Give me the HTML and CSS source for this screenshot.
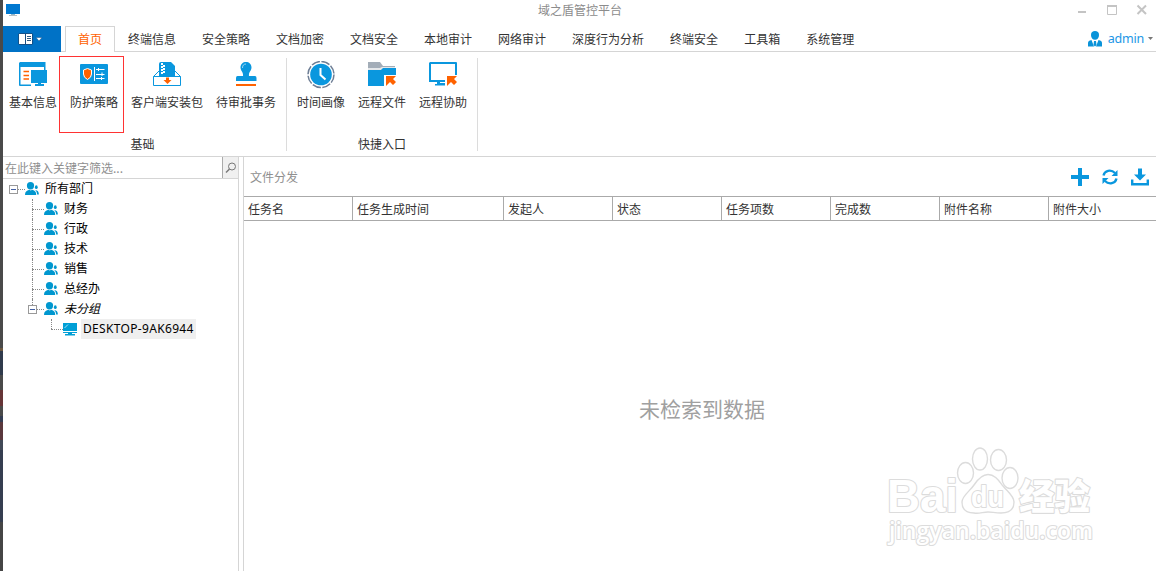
FILE: index.html
```html
<!DOCTYPE html>
<html lang="zh-CN">
<head>
<meta charset="utf-8">
<title>域之盾管控平台</title>
<link rel="stylesheet" href="styles.css">
</head>
<body>
<svg class="defs" aria-hidden="true">
  <symbol id="people" viewBox="0 0 14 13">
    <ellipse cx="11.300" cy="5.200" rx="1.400" ry="1.900"/><path d="M10.200 8C12.800 8.200 13.800 9.700 13.900 12.500H12.100C12 10.500 11.500 9.300 10.200 8Z"/>
    <ellipse cx="5.500" cy="3.700" rx="3.600" ry="3.700"/><path d="M0 12.900C0 9.800 1.600 8.600 4.300 7.800L5.700 8.600 7.300 7.800C10 8.600 11.200 9.800 11.200 12.900Z"/>
  </symbol>
</svg>
<div class="window">
  <div class="desktop-edge"></div>
  <div class="app">
    <header class="titlebar">
      <svg class="app-icon" width="16" height="14" viewBox="0 0 16 14"><path fill="#0078d0" d="M1 1H15V11H1Z"/><path fill="#8fb4c8" d="M6 11h4v1H6z"/><path fill="#b5bfc4" d="M4 12h8v1H4z"/></svg>
      <h1 class="title">域之盾管控平台</h1>
      <svg class="controls" width="72" height="14" viewBox="0 0 72 14"><g fill="none" stroke="#c4c4c4"><path stroke-width="2" d="M0 8H8M59.500 1.500L68 10M68 1.500L59.500 10"/><path d="M29.500 1.500H38.500V10.500H29.500Z"/><path stroke-width="2" d="M29 2H39"/></g></svg>
    </header>
    <nav class="tabs">
      <button class="file-menu"><svg width="25" height="12" viewBox="0 0 25 12"><rect x=".6" y=".6" width="14" height="10.800" rx="1" fill="#174f83" stroke="#174f83"/><path fill="#fff" d="M1 1H7V11H1ZM8 1H14V11H8Z"/><path stroke="#315c82" d="M9 3.500H13M9 5.500H13M9 7.500H13"/><path fill="#fff" stroke="#12538c" stroke-width=".5" d="M18 4.500H24L21 8Z"/></svg></button>
      <a class="tab active">首页</a><a class="tab">终端信息</a><a class="tab">安全策略</a><a class="tab">文档加密</a><a class="tab">文档安全</a><a class="tab">本地审计</a><a class="tab">网络审计</a><a class="tab">深度行为分析</a><a class="tab">终端安全</a><a class="tab">工具箱</a><a class="tab">系统管理</a>
      <div class="user">
        <svg width="14" height="16" viewBox="0 0 14 16" fill="#0a93d9"><path d="M3 4C3 1 4.600 0 7 0S11 1 11 4 9.300 8.700 7 8.700 3 7 3 4Z"/><path d="M0 15.500V12Q0 9.500 3.500 9L6 15.500ZM14 15.500V12Q14 9.500 10.500 9L8 15.500Z"/><path d="M6 10H8L8.500 14 7 15.500 5.500 14Z"/></svg>
        <span class="user-name">admin</span>
        <svg class="caret" width="5" height="3" viewBox="0 0 5 3"><path fill="#777" d="M0 0H5L2.500 3Z"/></svg>
      </div>
    </nav>
    <section class="ribbon">
      <div class="group">
        <div class="actions">
          <button class="action">
            <svg width="28" height="28" viewBox="0 0 28 28"><path fill="#0a97de" d="M1 1H26.500V9H25V6H1.500V23.500H12V25H1Q0 25 0 24V2Z"/><path stroke="#ff6200" stroke-width="1.500" d="M4.500 10.500H10M4.500 14.500H10M4.500 18H10"/><path fill="#0a97de" d="M12 9H28V22H22V23H25V25H16V23H19V22H12Z"/></svg>
            <span>基本信息</span></button>
          <button class="action marked">
            <svg width="28" height="28" viewBox="0 0 28 28"><rect y="3" width="28" height="20" rx="1" fill="#0a97de"/><path fill="#ff6200" stroke="#fff" d="M7.500 7.500L11.500 9V13Q11.500 16.500 7.500 18.500 3.500 16.500 3.500 13V9Z"/><path stroke="#fff" fill="none" d="M14.500 6V20M16 8.500H24.500M16 13.500H24.500M16 17.500H24.500M18.500 7V10M22 11.500V15M21.500 16V19"/></svg>
            <span>防护策略</span></button>
          <button class="action">
            <svg width="28" height="28" viewBox="0 0 28 28"><path fill="#0a97de" d="M6 15V3Q6 1 8 1H18L22 5V15Z"/><path stroke="#fff" stroke-width="2" stroke-dasharray="2 1" d="M9 2V13"/><path stroke="#fff" stroke-width="2" stroke-dasharray="2 1" stroke-dashoffset="2" d="M11 3V13"/><path stroke="#0a97de" fill="none" d="M6 10L.5 15.500H27.500L22 10"/><path stroke="#0a97de" fill="#fff" d="M.5 15.500H27.500V24.500H.5Z"/><path fill="#ff6200" d="M13 16.500H16V19H18.500L14.500 23 10.500 19H13Z"/></svg>
            <span>客户端安装包</span></button>
          <button class="action">
            <svg width="28" height="28" viewBox="0 0 28 28"><path fill="#0a97de" d="M8.500 6.500C8.500 3 11 1 14 1S19.500 3 19.500 6.500C19.500 10 16.500 11 17 15H23Q24.500 15 24.500 17V20H4V17Q4 15 5.500 15H11C11.500 11 8.500 10 8.500 6.500Z"/><path stroke="#9bd5f2" fill="none" d="M10.500 7C10.500 4 12 3 14 3"/><path fill="#ff6200" d="M4 23H24V25H4Z"/></svg>
            <span>待审批事务</span></button>
        </div>
        <div class="group-name">基础</div>
      </div>
      <div class="group">
        <div class="actions">
          <button class="action">
            <svg width="28" height="28" viewBox="0 0 28 28"><circle cx="14" cy="13.500" r="13" fill="none" stroke="#6e7e95" stroke-width="1.500" stroke-dasharray="8.700 1.510"/><circle cx="14" cy="13.500" r="10.800" fill="#0a97de"/><path fill="none" stroke="#fff" stroke-width="2" d="M13.500 7V14L18.500 18.500"/></svg>
            <span>时间画像</span></button>
          <button class="action">
            <svg width="28" height="28" viewBox="0 0 28 28"><path fill="#a3adb8" d="M0 26V1H12L15 5H27V14H0Z"/><path fill="#fff" d="M0 7H12L14 6H28V8H15L13 9H0Z" opacity=".7"/><path fill="#0a97de" d="M0 25V9H13L15 7H28V25Z"/><path fill="#fff" d="M16 14H28V27H16Z"/><path fill="#ff6200" d="M18 15H28L25 18 28 21 25 24 22 21 18 25Z"/></svg>
            <span>远程文件</span></button>
          <button class="action">
            <svg width="28" height="28" viewBox="0 0 28 28"><path fill="#0a97de" d="M1 1H27Q28 1 28 2V14H26V3H2V19H16V21H0V2Z"/><path fill="#0a97de" d="M8 21H11V22H16V24.500H6V23H8Z"/><path fill="#ff6200" d="M18 15H28L25 18 28 21 25 24 22 21 18 25Z"/></svg>
            <span>远程协助</span></button>
        </div>
        <div class="group-name">快捷入口</div>
      </div>
    </section>
    <main class="body">
      <aside class="sidebar">
        <div class="search"><span class="search-hint">在此键入关键字筛选...</span><button class="search-btn"><svg width="12" height="12" viewBox="0 0 12 12" fill="none" stroke="#777"><circle cx="7" cy="4.500" r="3.500"/><path stroke-width="1.400" d="M4.500 7L1 10.500"/></svg></button></div>
        <ul class="tree">
          <li class="root"><span class="toggle"></span><span class="dots"></span><svg class="people"><use href="#people"/></svg><span class="name">所有部门</span></li>
          <li class="child"><span class="dots"></span><svg class="people"><use href="#people"/></svg><span class="name">财务</span></li>
          <li class="child"><span class="dots"></span><svg class="people"><use href="#people"/></svg><span class="name">行政</span></li>
          <li class="child"><span class="dots"></span><svg class="people"><use href="#people"/></svg><span class="name">技术</span></li>
          <li class="child"><span class="dots"></span><svg class="people"><use href="#people"/></svg><span class="name">销售</span></li>
          <li class="child"><span class="dots"></span><svg class="people"><use href="#people"/></svg><span class="name">总经办</span></li>
          <li class="child last"><span class="toggle"></span><span class="dots"></span><svg class="people"><use href="#people"/></svg><span class="name italic">未分组</span></li>
          <li class="leaf"><span class="dots"></span><svg class="pc" width="14" height="13" viewBox="0 0 14 13"><path fill="#009fd6" d="M0 0H14V10H9V11H12V12.500H2V11H5V10H0Z"/><path stroke="#fff" d="M0 8.500H14"/><path stroke="#a6dff2" fill="none" d="M1.500 5L5 1.500"/></svg><span class="name selected">DESKTOP-9AK6944</span></li>
        </ul>
      </aside>
      <section class="content">
        <div class="toolbar">
          <h2 class="heading">文件分发</h2>
          <div class="tools">
            <svg width="18" height="18" viewBox="0 0 18 18"><path fill="#0a97de" d="M7 0H11V7H18V11H11V18H7V11H0V7H7Z"/></svg>
            <svg width="16" height="16" viewBox="0 0 16 16"><g fill="none" stroke="#0a97de" stroke-width="2.300"><path d="M1.500 6.500C2.500 1.500 9 0 13 4M14.500 9.500C13.500 14.500 7 16 3 12"/></g><path fill="#0a97de" d="M15.500 1V7H9.500ZM.5 15V9H6.500Z"/></svg>
            <svg width="18" height="18" viewBox="0 0 18 18"><path fill="#0a97de" d="M7 .5H11V6.500H15L9 12.500 3 6.500H7Z"/><path fill="none" stroke="#0a97de" stroke-width="2.400" d="M1.200 11.500V16.300H16.800V11.500"/></svg>
          </div>
        </div>
        <div class="columns"><span>任务名</span><span>任务生成时间</span><span>发起人</span><span>状态</span><span>任务项数</span><span>完成数</span><span>附件名称</span><span>附件大小</span></div>
        <div class="empty">未检索到数据</div>
      </section>
    </main>
  </div>
  <svg class="watermark" width="230" height="125" viewBox="0 0 230 125">
    <g fill="#fff" stroke="#dcdcdc" stroke-width="1.400">
      <text class="wm-logo" x="6" y="71" textLength="71" lengthAdjust="spacingAndGlyphs">Bai</text>
      <ellipse cx="84.500" cy="32" rx="8" ry="10.500"/><ellipse cx="99" cy="18" rx="7.500" ry="11"/><ellipse cx="117.500" cy="19" rx="8" ry="10.500"/><ellipse cx="129" cy="37" rx="8" ry="10.500"/>
      <path d="M107 33.500C114 33.500 118 40 122 45C127 51 133 55 133 61C133 69 128 72 120 72C114 72 111 71 107 71C102 71 98 73 93 72C85 72 81 68 81 61C81 55 89 50 93 44C97 38 101 33.500 107 33.500Z"/>
      <text class="wm-du" x="90" y="66" textLength="33" lengthAdjust="spacingAndGlyphs">du</text>
      <text class="wm-cn" x="138" y="69" textLength="71" lengthAdjust="spacingAndGlyphs">经验</text>
      <text class="wm-url" x="8" y="98" textLength="204" lengthAdjust="spacingAndGlyphs">jingyan.baidu.com</text>
    </g>
  </svg>
</div>
</body>
</html>
```
FILE: styles.css
```css
*, *::before, *::after { box-sizing: border-box; }
body, h1, h2, ul { margin: 0; padding: 0; }
body {
  width: 1156px; height: 571px; overflow: hidden; background: #fff;
  font: 12px/18px "Noto Sans CJK SC", sans-serif; color: #333;
}
button { border: 0; padding: 0; margin: 0; background: none; font: inherit; color: inherit; }
svg { display: block; flex: none; }
.defs { position: absolute; width: 0; height: 0; }
.window { position: relative; display: flex; height: 571px; }
.desktop-edge {
  width: 3px; flex: none;
  background: linear-gradient(#4a4a4a 0 348px, #6b5740 348px 351px, #303b4c 351px 375px, #4a4a4a 375px 390px, #663537 390px 406px, #4a4a4a 406px 416px, #343d52 416px 422px, #5a383d 422px 440px, #414957 440px 450px, #353e50 450px 522px, #454545 522px);
}
.app { flex: 1; display: flex; flex-direction: column; min-width: 0; }

.titlebar { height: 26px; display: flex; align-items: flex-start; justify-content: space-between; padding: 3px 6px 0 2px; }
.title { font-size: 12px; font-weight: 400; line-height: 14px; color: #8c8c8c; margin-left: 61px; }
.controls { margin-top: 1px; }

.tabs { height: 26px; display: flex; border-bottom: 1px solid #d5d5d5; }
.file-menu { width: 58px; height: 26px; margin-right: 4px; background: #0072c6; display: flex; align-items: center; padding-left: 15px; }
.tab { padding: 4px 13px 0; height: 26px; }
.tab.active { width: 50px; color: #ff6200; background: #fff; border: 1px solid #d5d5d5; border-bottom: 0; padding: 3px 12px 0; }
.user { margin-left: auto; display: flex; align-items: center; padding-right: 3px; color: #2196e6; }
.user-name { font: 12.5px/18px "Noto Sans", sans-serif; letter-spacing: -.2px; margin: 0 4px 0 6px; }

.ribbon { height: 105px; flex: none; display: flex; border-bottom: 1px solid #d5d5d5; padding: 6px 0 5px; }
.group { border-right: 1px solid #dcdcdc; padding: 0 10px; display: flex; flex-direction: column; justify-content: space-between; }
.group:first-child { padding-left: 6px; }
.actions { display: flex; gap: 13px; padding-top: 3px; }
.action { display: flex; flex-direction: column; align-items: center; gap: 4px; position: relative; }
.marked::after {
  content: ""; position: absolute; left: -11px; top: -5px; width: 65px; height: 77px; border: 1px solid #f33;
}
.group-name { text-align: center; line-height: 14px; }

.body { flex: 1; display: flex; min-height: 0; }
.sidebar { width: 236px; border-right: 1px solid #d5d5d5; }
.search { height: 22px; display: flex; border-bottom: 1px solid #d5d5d5; }
.search-hint { flex: 1; padding-left: 2px; line-height: 21px; color: #8f8f8f; }
.search-btn { width: 16px; border-left: 1px solid #aaa; background: #f0f0f0; display: flex; align-items: center; justify-content: center; }
.tree { list-style: none; color: #000; }
.tree li { height: 20px; display: flex; align-items: center; position: relative; }
.root { padding-left: 6px; }
.child { padding-left: 29px; }
.child.last { padding-left: 25px; }
.leaf { padding-left: 48px; }
.child::before, .leaf::before { content: ""; position: absolute; left: 29px; top: 0; height: 20px; border-left: 1px dotted #888; }
.child.last::before { height: 6px; }
.leaf::before { left: 48px; height: 10px; }
.toggle { width: 9px; height: 9px; border: 1px solid #999; background: linear-gradient(#4461a5, #4461a5) center / 5px 1px no-repeat; }
.dots { width: 7px; border-top: 1px dotted #888; }
.child .dots, .leaf .dots { width: 12px; }
.child.last .dots { width: 7px; }
.people { width: 14px; height: 13px; fill: #0097cf; margin-top: -1px; }
.name { margin-left: 6px; line-height: 18px; margin-top: -2px; }
.italic { font-style: italic; }
.leaf .name { margin-left: 4px; margin-top: 0; }
.selected { background: #efefef; padding: 0 2px; height: 20px; line-height: 19px; font-family: "Noto Sans", sans-serif; letter-spacing: .33px; }

.content { flex: 1; margin-left: 4px; border-left: 1px solid #d5d5d5; display: flex; flex-direction: column; }
.toolbar { height: 39px; display: flex; justify-content: space-between; align-items: center; padding: 1px 7px 0 6px; }
.heading { font-size: 12px; font-weight: 400; color: #8f8f8f; }
.tools { display: flex; align-items: center; gap: 13px; }
.columns { height: 25px; display: grid; grid-template-columns: 109px 151px repeat(5, 109px) 1fr; border-top: 1px solid #aaa; border-bottom: 1px solid #aaa; }
.columns span { padding-left: 4px; line-height: 23px; border-right: 1px solid #aaa; }
.columns span:last-child { border-right: 0; }
.empty { flex: 1; display: flex; align-items: center; justify-content: center; font-size: 21px; line-height: 30px; color: #a0a0a0; padding: 23px 0 0 4px; }

.watermark { position: absolute; left: 881px; top: 441px; }
.watermark text { paint-order: stroke; stroke-width: 2.2px; stroke-linejoin: round; }
.wm-logo { font: 700 46px "Liberation Sans", sans-serif; }
.wm-du { font: 700 30px "Liberation Sans", sans-serif; }
.wm-cn { font: 900 36px "Noto Sans CJK SC", sans-serif; }
.wm-url { font: 600 24px "Open Sans", sans-serif; }
```
